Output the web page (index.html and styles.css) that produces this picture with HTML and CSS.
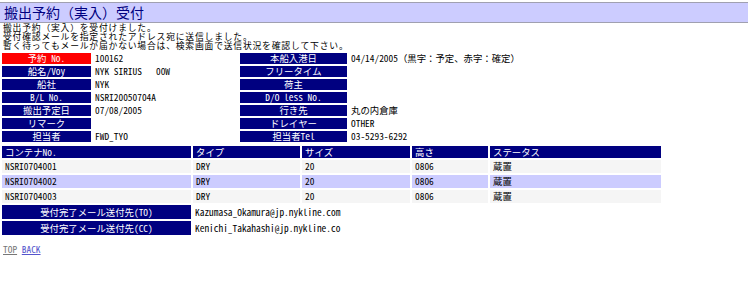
FILE: index.html
```html
<!DOCTYPE html>
<html lang="ja">
<head>
  <meta charset="UTF-8">
  <title>搬出予約（実入）受付</title>
  <link rel="stylesheet" href="styles.css">
</head>
<body>

<div class="title">搬出予約（実入）受付</div>

<div class="message">
  <div>搬出予約（実入）を受付けました。</div>
  <div>受付確認メールを指定されたアドレス宛に送信しました。</div>
  <div>暫く待ってもメールが届かない場合は、検索画面で送信状況を確認して下さい。</div>
</div>

<table class="info">
  <colgroup>
    <col style="width: 89px">
    <col style="width: 145px">
    <col style="width: 107px">
    <col>
  </colgroup>
  <tr>
    <th class="key">予約 No.</th>
    <td>100162</td>
    <th>本船入港日</th>
    <td>04/14/2005（黒字：予定、赤字：確定）</td>
  </tr>
  <tr>
    <th>船名/Voy</th>
    <td class="pre">NYK SIRIUS   00W</td>
    <th>フリータイム</th>
    <td></td>
  </tr>
  <tr>
    <th>船社</th>
    <td>NYK</td>
    <th>荷主</th>
    <td></td>
  </tr>
  <tr>
    <th>B/L No.</th>
    <td>NSRI20050704A</td>
    <th>D/O less No.</th>
    <td></td>
  </tr>
  <tr>
    <th>搬出予定日</th>
    <td>07/08/2005</td>
    <th>行き先</th>
    <td>丸の内倉庫</td>
  </tr>
  <tr>
    <th>リマーク</th>
    <td></td>
    <th>ドレイヤー</th>
    <td>OTHER</td>
  </tr>
  <tr>
    <th>担当者</th>
    <td>FWD_TYO</td>
    <th>担当者Tel</th>
    <td>03-5293-6292</td>
  </tr>
</table>

<table class="containers">
  <colgroup>
    <col style="width: 189px">
    <col style="width: 107px">
    <col style="width: 108px">
    <col style="width: 76px">
    <col style="width: 171px">
  </colgroup>
  <tr>
    <th>コンテナNo.</th>
    <th>タイプ</th>
    <th>サイズ</th>
    <th>高さ</th>
    <th>ステータス</th>
  </tr>
  <tr class="odd">
    <td>NSRI0704001</td>
    <td>DRY</td>
    <td>20</td>
    <td>0806</td>
    <td>蔵置</td>
  </tr>
  <tr class="even">
    <td>NSRI0704002</td>
    <td>DRY</td>
    <td>20</td>
    <td>0806</td>
    <td>蔵置</td>
  </tr>
  <tr class="odd">
    <td>NSRI0704003</td>
    <td>DRY</td>
    <td>20</td>
    <td>0806</td>
    <td>蔵置</td>
  </tr>
</table>

<table class="mail">
  <colgroup>
    <col style="width: 189px">
    <col>
  </colgroup>
  <tr>
    <th>受付完了メール送付先(TO)</th>
    <td>Kazumasa_Okamura@jp.nykline.com</td>
  </tr>
  <tr>
    <th>受付完了メール送付先(CC)</th>
    <td>Kenichi_Takahashi@jp.nykline.co</td>
  </tr>
</table>

<div class="links">
  <a href="#top" class="visited">TOP</a>
  <a href="#back">BACK</a>
</div>

</body>
</html>
```

FILE: styles.css
```css
/* page */
body {
  margin: 0;
  padding: 0 2px 0 0;
  font-family: "Noto Sans Mono CJK JP", "Noto Sans CJK JP", monospace;
  font-size: 9.4px;
  color: #000;
  background: #fff;
}
.title {
  margin-top: 2px;
  height: 19px;
  line-height: 19px;
  padding-left: 4px;
  background-color: #ccccff;
  border-top: 1px solid #a0a0b0;
  border-bottom: 1px solid #a0a0b0;
  color: #000080;
  font-size: 14px;
}
.message {
  padding: 0 0 0 3px;
  margin-bottom: 1px;
  font-size: 8.8px;
  letter-spacing: 0.8px;
}
.message div {
  height: 9px;
  line-height: 9px;
}

/* tables */
table {
  border-collapse: separate;
  border-spacing: 2px;
  table-layout: fixed;
}
th, td {
  padding: 0;
  font-weight: normal;
  white-space: nowrap;
}
.info {
  width: 100%;
}
.info th {
  height: 11px;
  line-height: 11px;
  background-color: #000080;
  color: #fff;
  text-align: center;
}
.info th.key {
  background-color: #ff0000;
}
.info td {
  height: 11px;
  line-height: 11px;
  padding-left: 2px;
}
.pre {
  white-space: pre;
}
.containers th {
  height: 12px;
  line-height: 12px;
  padding-left: 3px;
  background-color: #000080;
  color: #fff;
  text-align: left;
}
.containers td {
  height: 13px;
  line-height: 13px;
  padding-left: 3px;
}
.containers .odd td {
  background-color: #f5f5f5;
}
.containers .even td {
  background-color: #ccccff;
}
.mail {
  width: 100%;
  margin-top: -2px;
}
.mail th {
  height: 11px;
  line-height: 11px;
  background-color: #000080;
  color: #fff;
  text-align: center;
}
.mail td {
  padding-left: 2px;
}

/* links */
.links {
  margin-top: 7px;
  padding-left: 3px;
  line-height: 11px;
}
.links a {
  color: #5555cc;
}
.links a.visited {
  color: #777;
}
```
